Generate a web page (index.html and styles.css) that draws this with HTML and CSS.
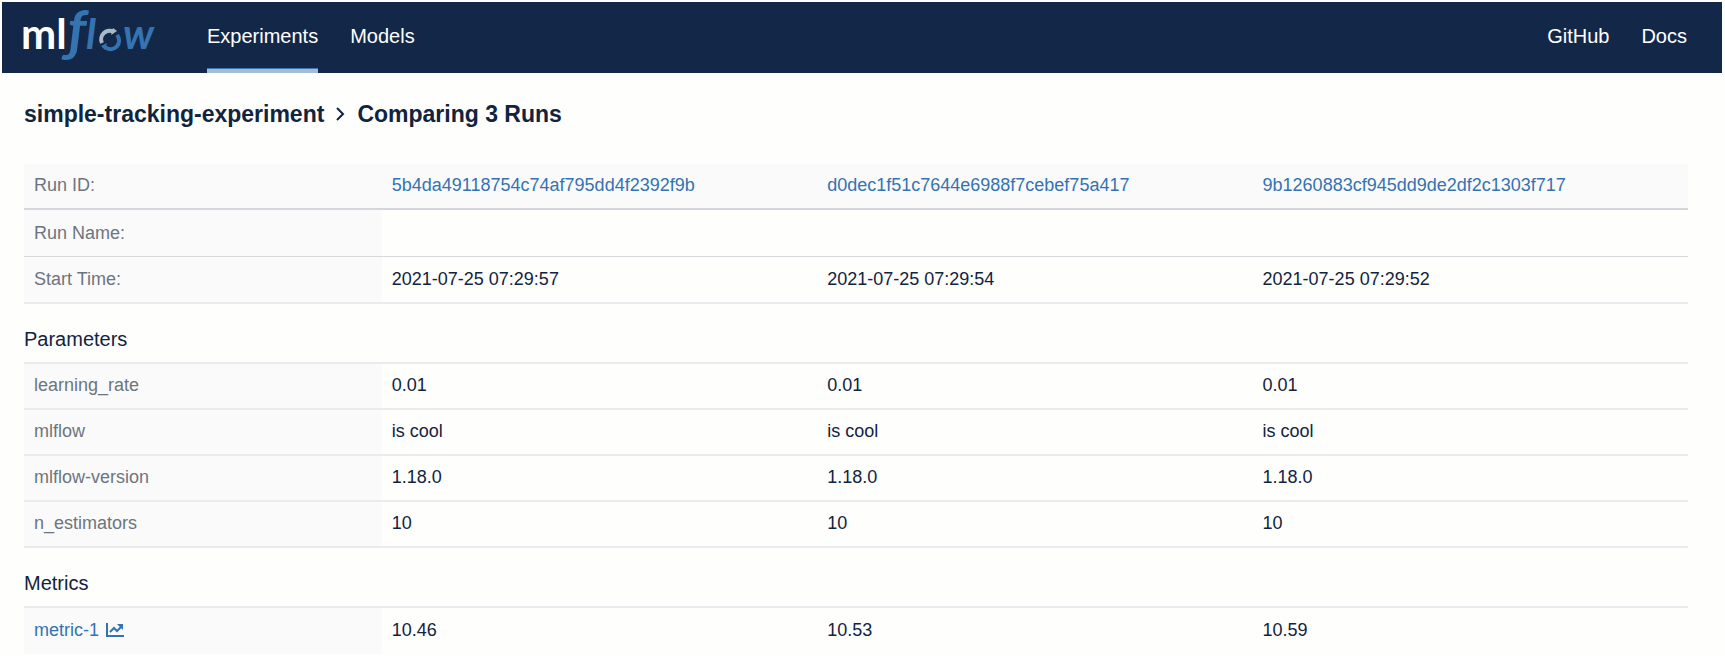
FILE: index.html
```html
<!DOCTYPE html>
<html lang="en">
<head>
<meta charset="utf-8">
<title>MLflow - Comparing 3 Runs</title>
<link rel="stylesheet" href="styles.css">
</head>
<body>
<header class="topbar">
  <a class="logo" href="#" aria-label="mlflow">
    <svg width="150" height="71" viewBox="18 2 150 71">
      <text class="logo-ml" x="21" y="49">ml</text>
      <text class="logo-f" x="68" y="50">ƒ</text>
      <text class="logo-flow" x="86" y="49">l</text>
      <g fill="none" stroke-width="4">
        <path class="ring-light" d="M102 43A8.500 8.500 0 0 1 114 32"/>
        <path class="ring-blue" d="M117 35A8.500 8.500 0 0 1 105 47"/>
      </g>
      <path class="ring-head-light" d="M113 28l4 3-6 4z"/>
      <path class="ring-head-blue" d="M107 43l-2 7-4-4z"/>
      <text class="logo-flow" x="123" y="49">w</text>
    </svg>
  </a>
  <nav class="nav">
    <a class="nav-link active" href="#">Experiments</a>
    <a class="nav-link" href="#">Models</a>
  </nav>
  <nav class="nav nav-right">
    <a class="nav-link" href="#">GitHub</a>
    <a class="nav-link" href="#">Docs</a>
  </nav>
</header>
<main class="content">
  <h1 class="title">
    <span>simple-tracking-experiment</span>
    <svg class="chevron" width="9" height="14" viewBox="0 0 9 14"><path d="M1 1l6 6-6 6"/></svg>
    <span>Comparing 3 Runs</span>
  </h1>
  <table class="table info">
    <thead>
      <tr><th scope="row">Run ID:</th><th><a href="#">5b4da49118754c74af795dd4f2392f9b</a></th><th><a href="#">d0dec1f51c7644e6988f7cebef75a417</a></th><th><a href="#">9b1260883cf945dd9de2df2c1303f717</a></th></tr>
    </thead>
    <tbody>
      <tr class="name-row"><th scope="row">Run Name:</th><td></td><td></td><td></td></tr>
      <tr><th scope="row">Start Time:</th><td>2021-07-25 07:29:57</td><td>2021-07-25 07:29:54</td><td>2021-07-25 07:29:52</td></tr>
    </tbody>
  </table>
  <h2 class="section">Parameters</h2>
  <table class="table values">
    <tbody>
      <tr><th scope="row">learning_rate</th><td>0.01</td><td>0.01</td><td>0.01</td></tr>
      <tr><th scope="row">mlflow</th><td>is cool</td><td>is cool</td><td>is cool</td></tr>
      <tr><th scope="row">mlflow-version</th><td>1.18.0</td><td>1.18.0</td><td>1.18.0</td></tr>
      <tr><th scope="row">n_estimators</th><td>10</td><td>10</td><td>10</td></tr>
    </tbody>
  </table>
  <h2 class="section">Metrics</h2>
  <table class="table values metrics">
    <tbody>
      <tr><th scope="row"><a class="metric" href="#">metric-1 <svg width="18" height="14" viewBox="0 0 18 14"><path class="axis" d="M1 0v13h17"/><path class="trend" d="M4 9l4-4 3 3 4-4"/><path class="tip" d="M11 1h6v6z"/></svg></a></th><td>10.46</td><td>10.53</td><td>10.59</td></tr>
    </tbody>
  </table>
</main>
</body>
</html>
```

FILE: styles.css
```css
* { box-sizing: border-box; }
body {
  margin: 0;
  padding: 2px 3px 0 2px;
  background: #fefefd;
  color: #12233f;
  font: 18px/22px "Liberation Sans", Arial, sans-serif;
}
a { color: #3373b3; text-decoration: none; }

.topbar {
  display: flex;
  height: 71px;
  padding: 0 35px 0 16px;
  background: #132848;
}
.logo { display: flex; width: 189px; }
.logo svg { overflow: visible; }
.logo-ml { fill: #fff; font: bold 42px Lato, sans-serif; }
.logo-f { fill: #3573b1; font: italic bold 56px Lato, sans-serif; }
.logo-flow { fill: #3573b1; font: italic bold 42px Lato, sans-serif; }
.ring-light { stroke: #a8bac8; }
.ring-blue { stroke: #3573b1; }
.ring-head-light { fill: #a8bac8; }
.ring-head-blue { fill: #3573b1; }

.nav { display: flex; gap: 32px; }
.nav-right { margin-left: auto; }
.nav-link {
  display: flex;
  align-items: center;
  padding-bottom: 3px;
  color: #fff;
  font-size: 20px;
}
.nav-link.active { box-shadow: inset 0 -4px #a4bdd2, inset 0 -5px #3a78b4; }

.content { padding: 0 34px 0 22px; }
.title {
  display: flex;
  align-items: center;
  gap: 12px;
  margin: 0;
  padding: 27px 0 36px;
  font-size: 23px;
  line-height: 28px;
}
.chevron { fill: none; stroke: #12233f; stroke-width: 2; }
.section {
  margin: 0;
  padding: 23px 0 11px;
  font-size: 20px;
  line-height: 24px;
  font-weight: normal;
}

.table {
  width: 100%;
  table-layout: fixed;
  border-spacing: 0;
  text-align: left;
}
.table th { font-weight: normal; }
.table th:first-child {
  width: 21.5%;
  background: #fafafa;
  color: #6c757e;
}
.table th, .table td {
  height: 46px;
  padding: 10px 10px 12px;
  border-bottom: 2px solid #e9ebef;
}
.info th, .info td { padding: 11px 10px 12px; }
.info thead th { padding-top: 10px; background: #fafafa; border-bottom-color: #d3d7dc; }
.info .name-row th, .info .name-row td { padding: 12px 10px; border-bottom: 1px solid #d5d9dc; }
.values { border-top: 2px solid #e9ebef; }
.metrics th, .metrics td { border-bottom: 0; }
.metric { display: flex; align-items: center; gap: 7px; }
.axis, .trend { fill: none; stroke: #3373b3; stroke-width: 2; }
.tip { fill: #3373b3; }
```
